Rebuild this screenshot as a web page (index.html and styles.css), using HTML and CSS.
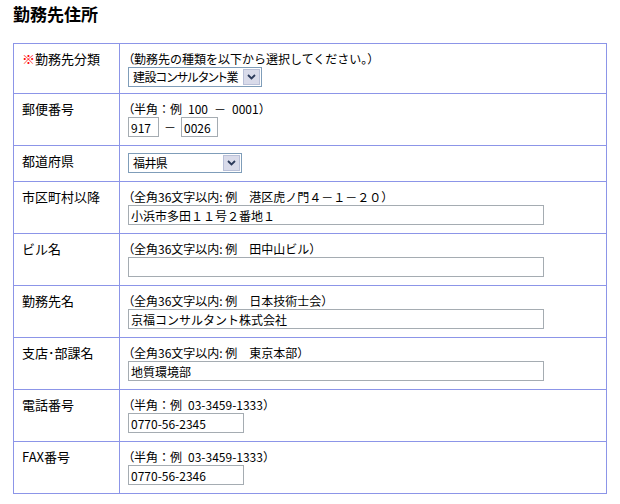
FILE: index.html
```html
<!DOCTYPE html>
<html lang="ja">
<head>
<meta charset="utf-8">
<title>勤務先住所</title>
<link rel="stylesheet" href="styles.css">
</head>
<body>
<div class="page">
  <h2 class="title">勤務先住所</h2>
  <table class="form">
    <colgroup><col class="col-label"><col class="col-field"></colgroup>
    <tr class="row-first">
      <th><span class="req">※</span>勤務先分類</th>
      <td>
        <div class="hint"><span class="op">（</span>勤務先の種類を以下から選択してください。）</div>
        <div class="select sel-type"><span class="sel-text">建設コンサルタント業</span><span class="sel-btn"><svg width="9" height="6" viewBox="0 0 9 6"><path d="M1 1 L4.5 4.5 L8 1" fill="none" stroke="#2b3a5a" stroke-width="1.8"/></svg></span></div>
      </td>
    </tr>
    <tr>
      <th>郵便番号</th>
      <td>
        <div class="hint"><span class="op">（</span>半角：例&ensp;100&ensp;－&ensp;0001）</div>
        <div class="zip">
          <input class="in in-zip1" type="text" value="917">
          <span class="dash">－</span>
          <input class="in in-zip2" type="text" value="0026">
        </div>
      </td>
    </tr>
    <tr>
      <th>都道府県</th>
      <td>
        <div class="select sel-pref"><span class="sel-text">福井県</span><span class="sel-btn"><svg width="9" height="6" viewBox="0 0 9 6"><path d="M1 1 L4.5 4.5 L8 1" fill="none" stroke="#2b3a5a" stroke-width="1.8"/></svg></span></div>
      </td>
    </tr>
    <tr>
      <th>市区町村以降</th>
      <td>
        <div class="hint"><span class="op">（</span>全角36文字以内: 例&ensp;&ensp;港区虎ノ門４－１－２０）</div>
        <input class="in in-long" type="text" value="小浜市多田１１号２番地１">
      </td>
    </tr>
    <tr>
      <th>ビル名</th>
      <td>
        <div class="hint"><span class="op">（</span>全角36文字以内: 例&ensp;&ensp;田中山ビル）</div>
        <input class="in in-long" type="text" value="">
      </td>
    </tr>
    <tr>
      <th>勤務先名</th>
      <td>
        <div class="hint"><span class="op">（</span>全角36文字以内: 例&ensp;&ensp;日本技術士会）</div>
        <input class="in in-long" type="text" value="京福コンサルタント株式会社">
      </td>
    </tr>
    <tr>
      <th>支店･部課名</th>
      <td>
        <div class="hint"><span class="op">（</span>全角36文字以内: 例&ensp;&ensp;東京本部）</div>
        <input class="in in-long" type="text" value="地質環境部">
      </td>
    </tr>
    <tr>
      <th>電話番号</th>
      <td>
        <div class="hint"><span class="op">（</span>半角：例&ensp;03-3459-1333）</div>
        <input class="in in-tel" type="text" value="0770-56-2345">
      </td>
    </tr>
    <tr>
      <th>FAX番号</th>
      <td>
        <div class="hint"><span class="op">（</span>半角：例&ensp;03-3459-1333）</div>
        <input class="in in-tel" type="text" value="0770-56-2346">
      </td>
    </tr>
  </table>
</div>
</body>
</html>
```

FILE: styles.css
```css
html, body {
  margin: 0;
  padding: 0;
  background: #ffffff;
}

body {
  font-family: "Noto Sans CJK JP", sans-serif;
  color: #000000;
  font-size: 12px;
}

.page {
  padding: 4px 13px 0 13px;
}

.title {
  margin: 0 0 19px 0;
  font-size: 17px;
  line-height: 20px;
  font-weight: bold;
}

.form {
  border-collapse: collapse;
  table-layout: fixed;
  width: 593px;
}

.col-label { width: 106px; }
.col-field { width: 487px; }

.form th,
.form td {
  border: 1px solid #8c95e8;
  padding: 7px 8px 8px 8px;
  vertical-align: top;
  text-align: left;
}

.form .row-first th,
.form .row-first td {
  padding-bottom: 6px;
}

.form th {
  font-weight: normal;
  font-size: 13px;
  line-height: 16px;
  white-space: nowrap;
}

.req {
  color: #ff0000;
}

.hint {
  font-size: 12px;
  line-height: 16px;
  white-space: nowrap;
}

.op {
  font-feature-settings: "palt" 1;
}

.in {
  display: block;
  box-sizing: border-box;
  height: 20px;
  margin: 0;
  padding: 0 2px;
  border: 1px solid #a5acb2;
  font-family: "Noto Sans CJK JP", sans-serif;
  font-size: 12px;
  line-height: 18px;
  color: #000000;
  background: #ffffff;
  outline: none;
}

.in-long { width: 416px; }
.in-tel { width: 116px; }
.in-zip1 { width: 31px; }
.in-zip2 { width: 37px; }

.zip {
  display: flex;
  align-items: center;
}

.dash {
  width: 22px;
  text-align: center;
  font-size: 12px;
  line-height: 20px;
}

.select {
  box-sizing: border-box;
  display: flex;
  align-items: stretch;
  height: 20px;
  border: 1px solid #7f9db9;
  background: #ffffff;
}

.sel-type { width: 134px; }
.sel-pref { width: 114px; }

.sel-text {
  flex: 1;
  padding-left: 4px;
  font-size: 12px;
  line-height: 18px;
  font-feature-settings: "palt" 1;
  letter-spacing: -0.6px;
  white-space: nowrap;
  overflow: hidden;
}

.sel-btn {
  box-sizing: border-box;
  width: 17px;
  margin: 1px;
  border: 1px solid #b9c0d8;
  background: #d9dbea;
  display: flex;
  align-items: center;
  justify-content: center;
}
```
